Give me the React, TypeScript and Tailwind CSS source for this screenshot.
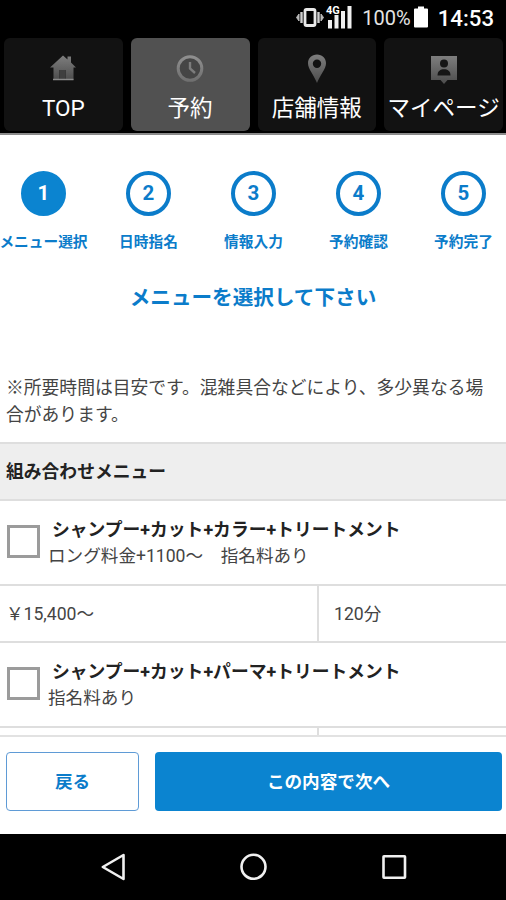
import React from 'react';

interface Tab {
  label: string;
  icon: React.ReactNode;
  active?: boolean;
}

interface MenuItem {
  id: number;
  name: string;
  note: string;
  price: string;
  time: string;
}

const HomeIcon = () => (
  <svg width="28" height="28" viewBox="0 0 28 28">
    <path d="M14 1.5 L1 13.5 H4.5 V26 H10.5 V16 H16.5 V26 H24.5 V13.5 H27 L22 8.5 V2.5 H18.5 V5.5 Z" fill="url(#tabIcon)" />
    <rect x="10.5" y="16" width="6" height="9" fill="#3f3f3f" />
    <path d="M4 25.5 H24.5" stroke="#8a8a8a" strokeWidth="1.5" />
  </svg>
);

const ClockIcon = () => (
  <svg width="28" height="28" viewBox="0 0 28 28">
    <circle cx="14" cy="14.500" r="11.8" fill="#454545" stroke="url(#tabRing)" strokeWidth="3" />
    <path d="M14 8 V14.500 L19 19" fill="none" stroke="#7c7c7c" strokeWidth="2.4" />
  </svg>
);

const PinIcon = () => (
  <svg width="28" height="30" viewBox="0 0 28 30">
    <path
      fillRule="evenodd"
      d="M14 0.5 C8.8 0.5 5 4.3 5 9.2 C5 15 11 21 14 29 C17 21 23 15 23 9.2 C23 4.3 19.2 0.5 14 0.5 Z M14 5.5 A4.2 4.2 0 1 1 14 13.9 A4.2 4.2 0 1 1 14 5.5 Z"
      fill="url(#tabIcon)"
    />
  </svg>
);

const PersonIcon = () => (
  <svg width="28" height="30" viewBox="0 0 28 30">
    <path d="M1 2 H27 V26 H17.5 L14 30 L10.5 26 H1 Z" fill="url(#tabIcon)" />
    <circle cx="14" cy="9.500" r="4" fill="#161616" />
    <path d="M7.5 21.500 C7.5 17 10.5 15.3 14 15.3 C17.5 15.3 20.5 17 20.5 21.500 Z" fill="#161616" />
  </svg>
);

const tabs: Tab[] = [
  { label: 'TOP', icon: <HomeIcon /> },
  { label: '予約', icon: <ClockIcon />, active: true },
  { label: '店舗情報', icon: <PinIcon /> },
  { label: 'マイページ', icon: <PersonIcon /> },
];

const steps = ['メニュー選択', '日時指名', '情報入力', '予約確認', '予約完了'];

const menus: MenuItem[] = [
  {
    id: 1,
    name: 'シャンプー+カット+カラー+トリートメント',
    note: 'ロング料金+1100〜　指名料あり',
    price: '￥15,400〜',
    time: '120分',
  },
  {
    id: 2,
    name: 'シャンプー+カット+パーマ+トリートメント',
    note: '指名料あり',
    price: '',
    time: '',
  },
];

const StatusBar = () => (
  <div className="h-[38px] shrink-0 flex items-start justify-end pr-3 text-white">
    <svg width="60" height="32" viewBox="0 0 60 32" className="mr-[8px]">
      <rect x="11" y="9.5" width="10" height="16" rx="1.5" fill="none" stroke="#e8e8e8" strokeWidth="2.8" />
      <path d="M7.5 12 V23 M24.5 12 V23" stroke="#d0d0d0" strokeWidth="2.4" />
      <path d="M5 14 L2.5 17.5 L5 21 Z M27 14 L29.500 17.5 L27 21 Z" fill="#b8b8b8" stroke="#b8b8b8" />
      <path d="M36 20 V28.500 M42.500 15 V28.500 M49 11 V28.500 M55.500 6 V28.500" stroke="#f0f0f0" strokeWidth="4" />
      <text x="32" y="14" fontSize="11" fontWeight="700" fontFamily="Roboto, sans-serif" fill="#fff" stroke="#000" strokeWidth="2" paintOrder="stroke">4G</text>
    </svg>
    <span className="mt-[4px] text-[20px] leading-7 text-[#e4e4e4]">100%</span>
    <svg width="16" height="32" viewBox="0 0 16 32" className="ml-[2px] mr-[9px]">
      <path d="M5 6.500 H11 V8.500 H14 Q15 8.500 15 9.500 V26.500 Q15 27.500 14 27.500 H2 Q1 27.500 1 26.500 V9.500 Q1 8.500 2 8.500 H5 Z" fill="#fff" />
    </svg>
    <span className="mt-[4px] text-[22.2px] leading-7 font-medium">14:53</span>
  </div>
);

const TabBar = () => (
  <nav className="h-[97px] shrink-0 flex items-start gap-[8px] pl-[4px] pr-[3px] border-b-2 border-[#8b8b8b]">
    <svg width="0" height="0" className="absolute">
      <defs>
        <linearGradient id="tabIcon" x1="0" y1="0" x2="0" y2="1">
          <stop offset="0" stopColor="#7e7e7e" />
          <stop offset="1" stopColor="#4c4c4c" />
        </linearGradient>
        <linearGradient id="tabRing" x1="0" y1="0" x2="0" y2="1">
          <stop offset="0" stopColor="#8f8f8f" />
          <stop offset="1" stopColor="#707070" />
        </linearGradient>
      </defs>
    </svg>
    {tabs.map((tab) => (
      <div
        key={tab.label}
        className={`flex-1 min-w-0 h-[93px] rounded-md flex flex-col items-center pt-4 whitespace-nowrap ${
          tab.active ? 'bg-[#515151]' : 'bg-[#121212]'
        }`}
      >
        <div className="h-[30px] flex items-start">{tab.icon}</div>
        <span className="mt-[8px] text-[22.5px] leading-8 text-white">{tab.label}</span>
      </div>
    ))}
  </nav>
);

const Steps = () => (
  <div className="overflow-hidden">
    <ol className="flex w-[525px] -ml-[9px] pt-[36px] text-[#0b7cca]">
      {steps.map((step, i) => (
        <li key={step} className="w-[105px] flex flex-col items-center font-bold">
          <span
            className={`size-[45px] rounded-full border-4 border-[#0b7cca] flex items-center justify-center text-[20.5px] ${
              i === 0 ? 'bg-[#0b84d0] border-[#0b84d0] text-white' : ''
            }`}
          >
            {i + 1}
          </span>
          <span className="mt-[16px] text-[14.7px] leading-5 whitespace-nowrap">{step}</span>
        </li>
      ))}
    </ol>
  </div>
);

const MenuRow = ({ item }: { item: MenuItem }) => (
  <div className="shrink-0">
    <div className="h-[84.67px] flex items-start border-b-2 border-[#dedede]">
      <div className="mt-[24px] ml-[7px] size-[33px] shrink-0 border-[3px] border-[#9b9b9b] bg-white" />
      <div className="ml-2 pt-[15px] text-[17.6px] leading-[27px] whitespace-nowrap">
        <p className="pl-[4px] text-[17.8px] font-bold text-[#222]">{item.name}</p>
        <p>{item.note}</p>
      </div>
    </div>
    <div className="h-[57.67px] flex border-b-2 border-[#dedede] leading-[57px] text-[17.6px]">
      <div className="w-[319px] pl-[6px] border-r-2 border-[#dedede]">{item.price}</div>
      <div className="pl-[15px]">{item.time}</div>
    </div>
  </div>
);

const App: React.FC = () => {
  return (
    <div className="w-[506px] h-[900px] flex flex-col overflow-hidden bg-black font-[Roboto,'Noto_Sans_CJK_JP',sans-serif]">
      <StatusBar />
      <TabBar />

      <main className="h-[600px] shrink-0 flex flex-col overflow-hidden bg-white text-[#444]">
        <div className="h-[307px] shrink-0">
          <Steps />
          <h1 className="mt-[31px] text-center text-[20.6px] leading-[30px] font-bold text-[#0b7cca]">
            メニューを選択して下さい
          </h1>
          <p className="mt-[61px] pl-[6px] pr-3 text-[17.8px] leading-[27px]">
            ※所要時間は目安です。混雑具合などにより、多少異なる場合があります。
          </p>
        </div>
        <h2 className="h-[59px] shrink-0 pl-[6px] border-y-2 border-[#dedede] bg-[#eee] text-[17.8px] leading-[56px] font-bold text-[#222]">
          組み合わせメニュー
        </h2>
        {menus.map((item) => (
          <MenuRow key={item.id} item={item} />
        ))}
      </main>

      <footer className="h-[99px] shrink-0 flex items-start gap-4 pt-[15px] pl-[6px] pr-1 border-t-2 border-[#e2e2e2] bg-white text-[17.6px] font-bold">
        <button className="w-[133px] h-[59px] pt-[2px] border-[1.5px] border-[#5f9bd6] rounded-sm text-[#0b7cca]">戻る</button>
        <button className="flex-1 h-[59px] pt-[2px] rounded-sm bg-[#0b84d0] text-white">この内容で次へ</button>
      </footer>

      <nav className="h-[66px] shrink-0 bg-black">
        <svg width="506" height="66" viewBox="0 0 506 66" fill="none" stroke="#f0f0f0" strokeWidth="2.6">
          <path d="M102.800 33 L123.500 21 V45 Z" strokeLinejoin="round" />
          <circle cx="253.500" cy="32.800" r="12" />
          <rect x="383.500" y="22.300" width="21.500" height="21.500" rx="0.5" />
        </svg>
      </nav>
    </div>
  );
};

export default App;
